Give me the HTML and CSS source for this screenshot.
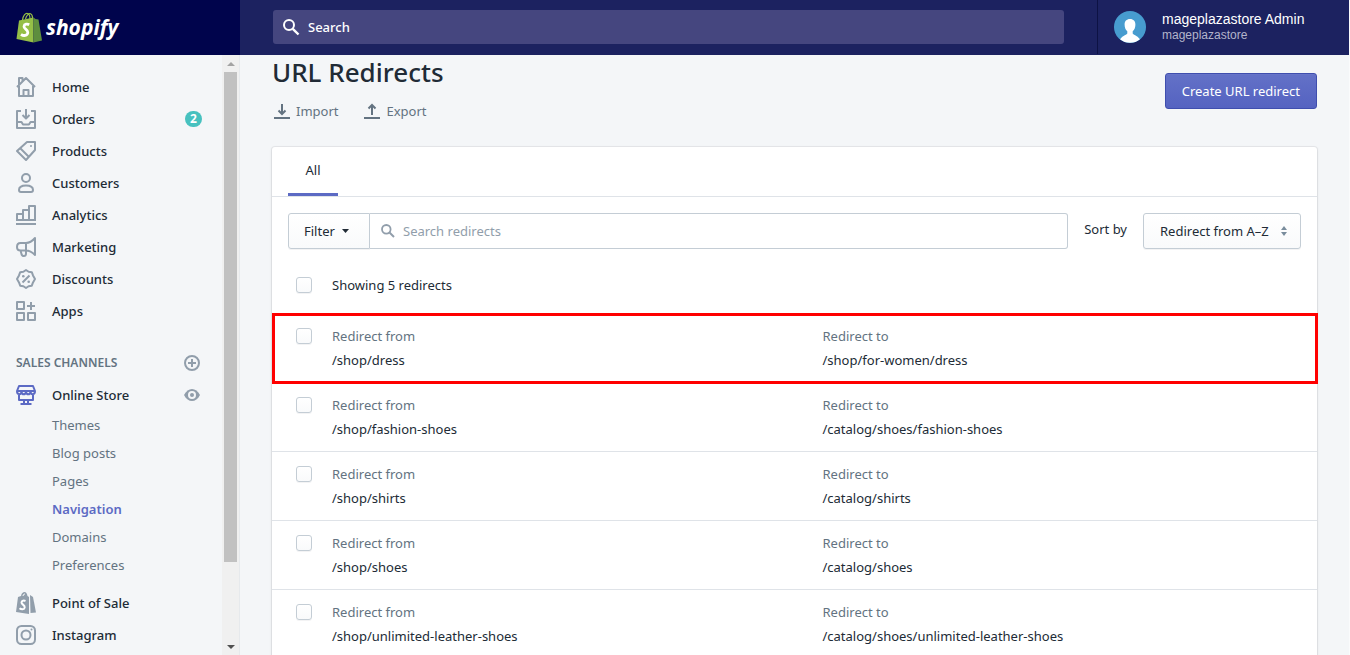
FILE: index.html
```html
<!DOCTYPE html>
<html lang="en">
<head>
<meta charset="utf-8">
<title>URL Redirects</title>
<link rel="stylesheet" href="styles.css">
</head>
<body>
<div class="app">
  <header class="topbar">
    <a class="brand" href="#">
      <svg class="brand-bag" width="27" height="31" viewBox="0 0 27 31" aria-hidden="true">
        <path d="M6.500 8C7 3.500 9.500 1 11.500 1.500S14 4.500 14 7M9.500 7C10.500 3 13 1.200 14.500 1.800S16.500 4 16.500 6" fill="none" stroke="#95bf47" stroke-width="1.200"/>
        <path d="M3 8.500L17.500 5.500V30.500L0.500 27Z" fill="#95bf47"/>
        <path d="M17.500 5.500L19.500 7L22.500 7.500L26 28.500L17.500 30.500Z" fill="#5e8e3e"/>
        <path d="M13.200 12.700C11.500 11.700 8.300 11.800 8 14.300C7.700 17 12 17.200 11.800 20.500C11.600 24 7.500 24.200 5 22.300" fill="none" stroke="#fff" stroke-width="2.800"/>
      </svg>
      <span class="brand-name">shopify</span>
    </a>
    <div class="search-area">
      <label class="global-search">
        <svg width="18" height="18" viewBox="0 0 18 18" aria-hidden="true"><circle cx="7" cy="7" r="5" fill="none" stroke="#fff" stroke-width="2"/><path d="M10.800 10.800L16.500 16.500" stroke="#fff" stroke-width="2.400"/></svg>
        <input type="search" placeholder="Search" aria-label="Search">
      </label>
    </div>
    <button class="account" type="button">
      <svg width="32" height="32" viewBox="0 0 32 32" aria-hidden="true"><circle cx="16" cy="16" r="16" fill="#479ccf"/><path d="M16 8C12.500 8 10.600 10.300 10.600 13.500C10.600 16.500 11.500 18.800 13.300 20.200V22.500C13.300 23.500 9 24.300 6 28.300A16 16 0 0 0 26 28.300C23 24.300 18.700 23.500 18.700 22.500V20.200C20.500 18.800 21.400 16.500 21.400 13.500C21.400 10.300 19.500 8 16 8Z" fill="#fff"/></svg>
      <span class="account-text"><span class="account-name">mageplazastore Admin</span><span class="account-store">mageplazastore</span></span>
    </button>
  </header>

  <div class="body">
    <aside class="sidebar">
      <nav class="nav">
        <a class="nav-item" href="#"><svg class="icon" viewBox="0 0 20 20"><path d="M3 9V19H17V9M1 10L10 1L19 10M7.500 19V13H12.500V19M3 8V1H6.500V4"/></svg>Home</a>
        <a class="nav-item" href="#"><svg class="icon" viewBox="0 0 20 20"><path d="M5 2H1V19H19V2H15M10 0V9M6.500 6L10 9.500L13.500 6M1 13H5.500L7 15.500H13L14.500 13H19"/></svg>Orders<span class="badge">2</span></a>
        <a class="nav-item" href="#"><svg class="icon" viewBox="0 0 20 20"><path d="M11 1H19V9L10 19L1 10ZM4 7L13 16"/><circle class="solid" cx="15" cy="5" r="1"/></svg>Products</a>
        <a class="nav-item" href="#"><svg class="icon" viewBox="0 0 20 20"><circle cx="10" cy="5" r="4"/><path d="M3 17C3 14 6 12.500 10 12.500S17 14 17 17C17 18.500 16 19 15 19H5C4 19 3 18.500 3 17Z"/></svg>Customers</a>
        <a class="nav-item" href="#"><svg class="icon" viewBox="0 0 20 20"><path d="M1 15V9H7V15M7 9V5H13V15M13 5V1H19V15M0 15H20M0 19H20"/></svg>Analytics</a>
        <a class="nav-item" href="#"><svg class="icon" viewBox="0 0 20 20"><path d="M19 1V18C16 15 13 13.500 10 13.500H4.500C2 13.500 1 12 1 10S2 6 4.500 6H10C13 6 16 4.500 19 1ZM10 6V16.500C10 20 6 19.500 5.500 17L4.500 13.500"/></svg>Marketing</a>
        <a class="nav-item" href="#"><svg class="icon" viewBox="0 0 20 20"><path d="M10 1L12.600 2.800L15.800 3.200L17 6.400L19 10L17 13.400L15.800 16.700L12.600 17.200L10 19L7.400 17.200L4.200 16.700L3 13.400L1 10L3 6.400L4.200 3.200L7.400 2.800ZM6.500 13.500L13.500 6.500"/><circle class="solid" cx="7.300" cy="7.300" r="1.300"/><circle class="solid" cx="12.700" cy="12.700" r="1.300"/></svg>Discounts</a>
        <a class="nav-item" href="#"><svg class="icon" viewBox="0 0 20 20"><path d="M1 1H8V8H1ZM1 12H8V19H1ZM12 12H19V19H12ZM15 1V9M11 5H19"/></svg>Apps</a>

        <div class="nav-heading">
          <h2>SALES CHANNELS</h2>
          <button class="icon-button" type="button" aria-label="Add sales channel"><svg class="icon-small" viewBox="0 0 16 16"><circle cx="8" cy="8" r="7"/><path d="M8 4V12M4 8H12"/></svg></button>
        </div>
        <div class="nav-row">
          <a class="nav-item" href="#"><svg class="icon active" viewBox="0 0 20 20"><path d="M3 1H17L19 6C19 10 15 10 14.500 7C14 10 10.500 10 10 7C9.500 10 6 10 5.500 7C5 10 1 10 1 6ZM1 6H19M3 9V15H17V9M8 15V18.500M12 15V18.500M4.500 19H15.500"/></svg>Online Store</a>
          <button class="icon-button" type="button" aria-label="View online store"><svg class="icon-eye" viewBox="0 0 16 16"><path d="M0 8C2 4 5 2 8 2S14 4 16 8C14 12 11 14 8 14S2 12 0 8Z" fill="#919eab"/><circle cx="8" cy="8" r="4" fill="#f4f6f8"/><circle cx="8" cy="8" r="2" fill="#919eab"/></svg></button>
        </div>
        <a class="sub-item" href="#">Themes</a>
        <a class="sub-item" href="#">Blog posts</a>
        <a class="sub-item" href="#">Pages</a>
        <a class="sub-item current" href="#">Navigation</a>
        <a class="sub-item" href="#">Domains</a>
        <a class="sub-item" href="#">Preferences</a>
        <a class="nav-item after-sub" href="#"><svg class="icon-pos" viewBox="0 0 20 22"><path d="M2 5L5 4C5.500 1 7 0 8.500 0S11 1.500 11.500 4L13 5V22L0 20Z" fill="#919eab"/><path d="M14 3L17 5L20 20.500L14.500 21Z" fill="#919eab"/><path d="M9.500 9C8 8.300 5.500 8.500 5.500 10.500S9 13 8.700 15.500S5 17.500 3.500 16.300" fill="none" stroke="#fff" stroke-width="2"/><path d="M7 4C7.300 2.500 8 1.800 9 2.200" fill="none" stroke="#fff"/></svg>Point of Sale</a>
        <a class="nav-item" href="#"><svg class="icon" viewBox="0 0 20 20"><rect x="1" y="1" width="18" height="18" rx="4.500"/><circle cx="10" cy="10" r="4.500"/><circle class="solid" cx="15.500" cy="4.500" r="1"/></svg>Instagram</a>
      </nav>
      <div class="scrollbar" aria-hidden="true">
        <span class="arrow-up"></span>
        <span class="thumb"></span>
        <span class="arrow-down"></span>
      </div>
    </aside>

    <main class="main">
      <div class="page-header">
        <div>
          <h1>URL Redirects</h1>
          <div class="actions">
            <button class="text-button" type="button"><svg width="16" height="16" viewBox="0 0 16 16"><path d="M8 1V11M4.500 7.500L8 11L11.500 7.500M0 15H16"/></svg>Import</button>
            <button class="text-button" type="button"><svg width="16" height="16" viewBox="0 0 16 16"><path d="M8 12V2M4.500 5.500L8 2L11.500 5.500M0 15H16"/></svg>Export</button>
          </div>
        </div>
        <button class="primary" type="button">Create URL redirect</button>
      </div>

      <section class="card">
        <div class="tabs" role="tablist"><button class="tab" role="tab" aria-selected="true" type="button">All</button></div>
        <div class="filters">
          <button class="filter" type="button">Filter<svg width="7" height="4" viewBox="0 0 7 4"><path d="M0 0H7L3.500 4Z" fill="#212b36"/></svg></button>
          <label class="field">
            <svg width="14" height="14" viewBox="0 0 14 14"><circle cx="5.300" cy="5.300" r="4.300" fill="none" stroke="#919eab" stroke-width="1.800"/><path d="M8.500 8.500L13 13" stroke="#919eab" stroke-width="2"/></svg>
            <input type="search" placeholder="Search redirects" aria-label="Search redirects">
          </label>
          <label class="sort-label" for="sort">Sort by</label>
          <div class="select">
            <select id="sort"><option>Redirect from A–Z</option></select>
            <svg class="select-icon" width="6" height="10" viewBox="0 0 6 10"><path d="M0 4L3 0L6 4ZM0 6L3 10L6 6Z" fill="#798c9c"/></svg>
          </div>
        </div>
        <label class="summary"><input class="check" type="checkbox">Showing 5 redirects</label>
        <ul class="rows">
          <li class="row highlighted"><input class="check" type="checkbox" aria-label="Select /shop/dress"><div><p class="caption">Redirect from</p><p>/shop/dress</p></div><div><p class="caption">Redirect to</p><p>/shop/for-women/dress</p></div></li>
          <li class="row"><input class="check" type="checkbox" aria-label="Select /shop/fashion-shoes"><div><p class="caption">Redirect from</p><p>/shop/fashion-shoes</p></div><div><p class="caption">Redirect to</p><p>/catalog/shoes/fashion-shoes</p></div></li>
          <li class="row"><input class="check" type="checkbox" aria-label="Select /shop/shirts"><div><p class="caption">Redirect from</p><p>/shop/shirts</p></div><div><p class="caption">Redirect to</p><p>/catalog/shirts</p></div></li>
          <li class="row"><input class="check" type="checkbox" aria-label="Select /shop/shoes"><div><p class="caption">Redirect from</p><p>/shop/shoes</p></div><div><p class="caption">Redirect to</p><p>/catalog/shoes</p></div></li>
          <li class="row"><input class="check" type="checkbox" aria-label="Select /shop/unlimited-leather-shoes"><div><p class="caption">Redirect from</p><p>/shop/unlimited-leather-shoes</p></div><div><p class="caption">Redirect to</p><p>/catalog/shoes/unlimited-leather-shoes</p></div></li>
        </ul>
      </section>
    </main>
  </div>
</div>
</body>
</html>
```
FILE: styles.css
```css
* { box-sizing: border-box; }
body, h1, h2, p, ul { margin: 0; padding: 0; }
body {
  background: #fafbfc;
  color: #212b36;
  font-family: "Noto Sans", "Open Sans", sans-serif;
  font-size: 13px;
  line-height: 24px;
}
button, input, select { font: inherit; color: inherit; margin: 0; }
button { padding: 0; border: 0; background: none; cursor: pointer; }
a { color: inherit; text-decoration: none; }
svg { display: block; flex: none; }

.app { display: flex; flex-direction: column; height: 100vh; padding-right: 1px; overflow: hidden; }

.topbar { display: flex; flex: none; height: 55px; padding-bottom: 1px; background: linear-gradient(to right, #00044c 240px, #1c2260 240px); color: #fff; }
.brand { display: flex; align-items: center; gap: 3px; width: 240px; padding-left: 16px; }
.brand-name { font-family: "Open Sans", "Noto Sans", sans-serif; font-size: 21px; font-style: italic; font-weight: 700; }
.search-area { flex: 1; display: flex; align-items: center; padding: 0 33px; }
.global-search { flex: 1; display: flex; align-items: center; gap: 8px; height: 34px; padding: 0 9px; border-radius: 3px; background: #45467f; }
.global-search input, .field input { flex: 1; min-width: 0; padding: 0; border: 0; outline: 0; background: none; appearance: none; }
.global-search input { font-weight: 500; }
.global-search input::placeholder { color: #fff; opacity: 1; }
.account { display: flex; align-items: center; gap: 16px; width: 252px; padding-left: 16px; border-left: 1px solid #0d1244; text-align: left; font-family: "Liberation Sans", Arial, sans-serif; }
.account-text { display: flex; flex-direction: column; line-height: 16px; }
.account-name { font-size: 14px; }
.account-store { font-size: 12px; color: #b3b5cb; }

.body { flex: 1; display: flex; min-height: 0; }
.sidebar { display: flex; flex: none; width: 240px; border-right: 1px solid #e6e9ec; background: #f4f6f8; overflow: hidden; }
.nav { flex: 1; padding: 16px 20px 0 16px; overflow: hidden; }
.nav-item { display: flex; flex: 1; align-items: center; gap: 16px; height: 32px; font-weight: 500; }
.icon, .icon-pos { width: 20px; height: 20px; overflow: visible; }
.icon-pos { height: 22px; }
.icon, .icon-small { fill: none; stroke: #919eab; stroke-width: 2; }
.icon path, .icon rect { stroke-linejoin: round; }
.icon .solid { fill: #919eab; stroke: none; }
.icon.active { stroke: #5c6ac4; }
.icon-small, .icon-eye { width: 16px; height: 16px; }
.badge { width: 17px; height: 16px; margin-left: auto; border-radius: 8px; background: #47c1bf; color: #fff; font-size: 12px; font-weight: 700; line-height: 16px; text-align: center; }
.nav-heading { display: flex; align-items: center; justify-content: space-between; height: 32px; margin-top: 20px; padding-right: 2px; }
.nav-heading h2 { color: #637381; font-size: 12px; font-weight: 600; }
.nav-row { display: flex; align-items: center; padding-right: 2px; }
.sub-item { display: block; padding-left: 36px; color: #637381; line-height: 28px; }
.sub-item.current { color: #5c6ac4; font-weight: 600; }
.after-sub { margin-top: 8px; }

.scrollbar { display: flex; flex-direction: column; align-items: center; width: 17px; padding: 7px 2px 6px; background: #f0f0f0; }
.arrow-up, .arrow-down { border: 4px solid transparent; }
.arrow-up { border-top: 0; border-bottom-color: #a3a3a3; }
.arrow-down { margin-top: auto; border-bottom: 0; border-top-color: #505050; }
.thumb { width: 13px; height: calc(100% - 97px); margin-top: 6px; background: #c1c1c1; }

.main { flex: 1; min-width: 0; padding: 0 32px; background: #f4f6f8; overflow: hidden; }
.page-header { display: flex; justify-content: space-between; align-items: flex-start; margin-bottom: 24px; }
h1 { margin-bottom: 10px; font-size: 26px; font-weight: 500; line-height: 34px; }
.actions { display: flex; gap: 26px; padding-left: 2px; }
.text-button { display: flex; align-items: center; gap: 6px; color: #637381; }
.text-button svg { fill: none; stroke: #637381; stroke-width: 2; }
.primary { height: 36px; margin-top: 18px; padding: 0 16px; border: 1px solid #3f4eae; border-radius: 3px; background: linear-gradient(#6371c7, #5563c1); box-shadow: inset 0 1px 0 #6774c8; color: #fff; }

.card { border-radius: 3px; background: #fff; box-shadow: 0 0 0 1px rgba(63, 63, 68, .07), 0 1px 3px rgba(63, 63, 68, .15); }
.tabs { display: flex; height: 50px; padding: 0 16px; border-bottom: 1px solid #dfe3e8; }
.tab { min-width: 50px; border-bottom: 3px solid #5c6ac4; }
.filters { display: flex; padding: 16px 16px 0; }
.filter { display: flex; align-items: center; gap: 7px; width: 82px; height: 36px; padding: 0 15px; border: 1px solid #c4cdd5; border-radius: 3px 0 0 3px; background: linear-gradient(#fff, #f9fafb); box-shadow: 0 1px 0 rgba(22, 29, 37, .05); }
.field { flex: 1; display: flex; align-items: center; gap: 8px; height: 36px; padding: 0 11px; border: 1px solid #c4cdd5; border-left: 0; border-radius: 0 3px 3px 0; }
.field input::placeholder { color: #919eab; opacity: 1; }
.sort-label { margin: 0 16px; line-height: 32px; }
.select { position: relative; width: 158px; }
.select select { width: 100%; height: 36px; padding: 0 16px; border: 1px solid #c4cdd5; border-radius: 3px; background: linear-gradient(#fff, #f9fafb); box-shadow: 0 1px 0 rgba(22, 29, 37, .05); appearance: none; }
.select-icon { position: absolute; top: 13px; right: 14px; pointer-events: none; }
.check { width: 16px; height: 16px; border: 1px solid #c4cdd5; border-radius: 3px; background: linear-gradient(#fff, #f9fafb); box-shadow: 0 1px 0 rgba(22, 29, 37, .05); appearance: none; }
.summary { display: flex; align-items: center; gap: 20px; padding: 24px 24px 17px; }
.rows { list-style: none; }
.row { position: relative; display: grid; grid-template-columns: 36px 1fr 1fr; padding: 10px 4px 10px 24px; border-bottom: 1px solid #dfe3e8; }
.row .check { margin-top: 4px; }
.caption { color: #637381; }
.highlighted::after { content: ""; position: absolute; inset: -1px -1px -2px 0; border: 3px solid #f00; pointer-events: none; }
```
